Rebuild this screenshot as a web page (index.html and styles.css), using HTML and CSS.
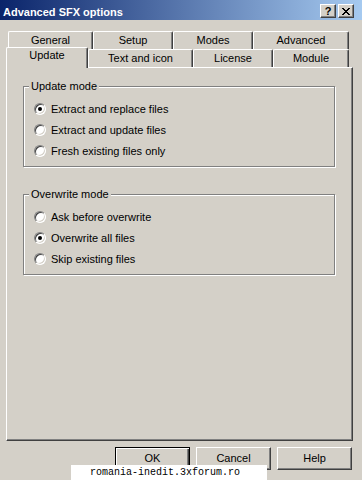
FILE: index.html
```html
<!DOCTYPE html>
<html>
<head>
<meta charset="utf-8">
<title>Advanced SFX options</title>
<link rel="stylesheet" href="styles.css">
</head>
<body>
<div class="window">
  <div class="titlebar">
    <span class="title">Advanced SFX options</span>
    <div class="caption-buttons">
      <span class="cap-btn">?</span>
      <span class="cap-btn">
        <svg width="8" height="7" viewBox="0 0 8 7"><path d="M0 0h2v1H0zM6 0h2v1H6zM1 1h2v1H1zM5 1h2v1H5zM2 2h4v1H2zM3 3h2v1H3zM2 4h4v1H2zM1 5h2v1H1zM5 5h2v1H5zM0 6h2v1H0zM6 6h2v1H6z" fill="#000"/></svg>
      </span>
    </div>
  </div>
  <div class="body">
    <div class="tabs">
      <div class="tab-row back">
        <div class="tab w-general">General</div>
        <div class="tab w-setup">Setup</div>
        <div class="tab w-modes">Modes</div>
        <div class="tab w-advanced">Advanced</div>
      </div>
      <div class="tab-row front">
        <div class="tab selected w-update">Update</div>
        <div class="tab w-text">Text and icon</div>
        <div class="tab w-license">License</div>
        <div class="tab w-module">Module</div>
      </div>
    </div>
    <div class="panel">
      <fieldset class="group">
        <legend>Update mode</legend>
        <div class="radio-row"><span class="radio checked"></span>Extract and replace files</div>
        <div class="radio-row"><span class="radio"></span>Extract and update files</div>
        <div class="radio-row"><span class="radio"></span>Fresh existing files only</div>
      </fieldset>
      <fieldset class="group second">
        <legend>Overwrite mode</legend>
        <div class="radio-row"><span class="radio"></span>Ask before overwrite</div>
        <div class="radio-row"><span class="radio checked"></span>Overwrite all files</div>
        <div class="radio-row"><span class="radio"></span>Skip existing files</div>
      </fieldset>
    </div>
    <div class="buttons">
      <div class="btn default">OK</div>
      <div class="btn">Cancel</div>
      <div class="btn">Help</div>
    </div>
  </div>
  <div class="watermark">romania-inedit.3xforum.ro</div>
</div>
</body>
</html>
```
FILE: styles.css
```css
html, body {
  margin: 0;
  padding: 0;
  background: #d4d0c8;
}
body {
  font-family: "Liberation Sans", Tahoma, Arial, sans-serif;
  font-size: 11px;
  color: #000;
}
.window {
  position: relative;
  width: 362px;
  height: 480px;
  overflow: hidden;
  background: #d4d0c8;
}
.titlebar {
  height: 20px;
  box-sizing: border-box;
  display: flex;
  align-items: flex-start;
  padding: 0 8px 0 3px;
  background: linear-gradient(to right, #0a246a, #a6caf0);
}
.title {
  flex: 1;
  color: #fff;
  font-weight: bold;
  line-height: 14px;
  padding-top: 5px;
}
.caption-buttons {
  display: flex;
  gap: 2px;
  padding-top: 4px;
}
.cap-btn {
  width: 16px;
  height: 14px;
  box-sizing: border-box;
  background: #d4d0c8;
  border: 1px solid;
  border-color: #fff #404040 #404040 #fff;
  box-shadow: inset -1px -1px 0 #808080;
  display: flex;
  align-items: center;
  justify-content: center;
  font-weight: bold;
  font-size: 11px;
  line-height: 12px;
}
.body {
  padding-top: 11px;
}
.tabs {
  height: 36px;
  padding-left: 8px;
}
.tab-row {
  display: flex;
  height: 18px;
}
.tab-row.front {
  margin-left: -2px;
  align-items: flex-end;
}
.tab {
  box-sizing: border-box;
  height: 18px;
  border-top: 1px solid #fff;
  border-left: 1px solid #fff;
  border-right: 1px solid #404040;
  border-radius: 2px 2px 0 0;
  box-shadow: inset -1px 0 0 #808080;
  text-align: center;
  line-height: 17px;
  background: #d4d0c8;
}
.tab-row.front .tab {
  line-height: 16px;
}
.tab-row.front .tab.selected {
  position: relative;
  z-index: 2;
  height: 21px;
  margin-bottom: -1px;
  line-height: 14px;
}
.w-general { width: 85px; }
.w-setup { width: 80px; }
.w-modes { width: 80px; }
.w-advanced { width: 96px; }
.w-update { width: 82px; }
.w-text { width: 105px; }
.w-license { width: 80px; }
.w-module { width: 76px; }
.panel {
  position: relative;
  z-index: 1;
  margin-left: 6px;
  width: 347px;
  height: 374px;
  box-sizing: border-box;
  border-top: 1px solid #fff;
  border-left: 1px solid #fff;
  border-right: 1px solid #404040;
  border-bottom: 1px solid #404040;
  box-shadow: inset -1px -1px 0 #808080;
  padding-top: 12px;
}
.group {
  margin: 0 17px 0 16px;
  padding: 5px 0 5px 10px;
  border: 1px solid #808080;
  box-shadow: 1px 1px 0 #fff, inset 1px 1px 0 #fff;
}
.group.second {
  margin-top: 21px;
}
.group legend {
  padding: 0 2px;
  margin-left: -5px;
  line-height: 13px;
  background: #d4d0c8;
}
.radio-row {
  height: 21px;
  display: flex;
  align-items: center;
}
.radio {
  position: relative;
  width: 12px;
  height: 12px;
  box-sizing: border-box;
  border-radius: 50%;
  background: #fff;
  border: 1px solid;
  border-color: #808080 #fff #fff #808080;
  box-shadow: inset 1px 1px 0 #404040, inset -1px -1px 0 #d4d0c8;
  margin-right: 5px;
  flex: none;
}
.radio.checked::after {
  content: "";
  position: absolute;
  left: 3px;
  top: 3px;
  width: 4px;
  height: 4px;
  border-radius: 50%;
  background: #000;
}
.buttons {
  display: flex;
  justify-content: flex-end;
  gap: 6px;
  padding: 6px 10px 0 0;
}
.btn {
  width: 75px;
  height: 23px;
  box-sizing: border-box;
  border: 1px solid;
  border-color: #fff #404040 #404040 #fff;
  box-shadow: inset -1px -1px 0 #808080;
  text-align: center;
  line-height: 20px;
}
.btn.default {
  border-color: #000;
  box-shadow: inset 1px 1px 0 #fff, inset -1px -1px 0 #404040, inset -2px -2px 0 #808080;
}
.watermark {
  position: absolute;
  left: 71px;
  top: 465px;
  width: 196px;
  height: 15px;
  box-sizing: border-box;
  padding-left: 19px;
  background: #fff;
  font-family: "Liberation Mono", "DejaVu Sans Mono", monospace;
  font-size: 10px;
  line-height: 15px;
  color: #000;
}
```
